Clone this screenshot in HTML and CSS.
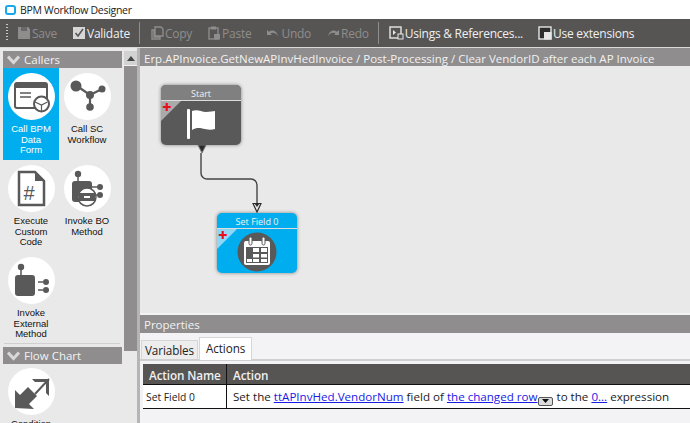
FILE: index.html
```html
<!DOCTYPE html>
<html lang="en">
<head>
<meta charset="utf-8">
<title>BPM Workflow Designer</title>
<link rel="stylesheet" href="styles.css">
</head>
<body>
<div class="app">
  <header class="titlebar">
    <svg class="app-icon" width="11" height="10" viewBox="0 0 11 10"><rect x="1" y="1" width="9" height="8" rx="2" fill="#fff" stroke="#1aa7e8" stroke-width="2"/></svg>
    <span>BPM Workflow Designer</span>
  </header>
  <div class="toolbar">
    <span class="grip"></span>
    <span class="tool off"><svg width="14" height="14" viewBox="0 0 14 14"><path d="M1 1h10l2 2v10H1z" fill="#8e8c8c"/><rect x="4" y="1" width="6" height="4" fill="#6a6868"/></svg>Save</span>
    <span class="tool on"><svg width="14" height="14" viewBox="0 0 14 14"><rect x="1" y="1" width="12" height="12" fill="#d6d6d6"/><path d="M3.500 7l2.500 3 5-7" fill="none" stroke="#555" stroke-width="1.500"/></svg>Validate</span>
    <span class="sep"></span>
    <span class="tool off"><svg width="14" height="14" viewBox="0 0 14 14"><path d="M5 1h6l2 2v7H5z M2 4h2v7h6v2H2z" fill="none" stroke="#8e8c8c" stroke-width="1.400"/></svg>Copy</span>
    <span class="tool off"><svg width="14" height="14" viewBox="0 0 14 14"><rect x="2" y="2" width="9" height="11" fill="none" stroke="#8e8c8c" stroke-width="1.400"/><rect x="4" y="0.500" width="5" height="3" fill="#8e8c8c"/><rect x="7" y="8" width="6" height="5.500" fill="#8e8c8c"/></svg>Paste</span>
    <span class="tool off"><svg width="14" height="14" viewBox="0 0 14 14"><path d="M1 4v5h5L4.300 7.500C6.500 6 9.500 6.500 12 10c-1-4.500-5-7.500-9-4.200z" fill="#8e8c8c"/></svg>Undo</span>
    <span class="tool off"><svg width="14" height="14" viewBox="0 0 14 14"><path d="M13 4v5H8l1.700-1.500C7.500 6 4.500 6.500 2 10c1-4.500 5-7.500 9-4.200z" fill="#8e8c8c"/></svg>Redo</span>
    <span class="sep"></span>
    <span class="tool on"><svg width="15" height="14" viewBox="0 0 15 14"><rect x="1" y="1" width="11" height="11" fill="none" stroke="#e6e6e6" stroke-width="1.400"/><path d="M4 4l3 2.500L4 9z" fill="#e6e6e6"/><rect x="9" y="8" width="5" height="5" fill="#555" stroke="#e6e6e6"/></svg>Usings &amp; References...</span>
    <span class="tool on"><svg width="14" height="14" viewBox="0 0 14 14"><rect x="1" y="1" width="12" height="12" fill="#2e2e2e" stroke="#e6e6e6" stroke-width="1.400"/><rect x="6" y="6" width="7.500" height="7.500" fill="#e6e6e6"/></svg>Use extensions</span>
  </div>
  <div class="workspace">
    <aside class="palette">
      <div class="palette-list">
        <div class="group-head">
          <svg width="13" height="10" viewBox="0 0 13 10"><path d="M1 1.500l5.500 6 5.500-6" fill="none" stroke="#d8d8d8" stroke-width="3"/></svg>
          <span>Callers</span>
        </div>
        <div class="tiles">
          <div class="tile active">
            <span class="disc"><svg width="47" height="47" viewBox="0 0 47 47"><rect x="7" y="10" width="32" height="25" rx="2" fill="none" stroke="#595959" stroke-width="2"/><path d="M7 12a2 2 0 0 1 2-2h28a2 2 0 0 1 2 2v3H7z" fill="#595959"/><path d="M12 20h11M12 24h11" stroke="#595959" stroke-width="1.500"/><circle cx="33.500" cy="31" r="7.500" fill="#fff" stroke="#595959" stroke-width="2"/><path d="M27 29l6.500 3 6-3M33.500 32v6" fill="none" stroke="#595959" stroke-width="1.200"/></svg></span>
            <span class="tile-label">Call BPM<br>Data<br>Form</span>
          </div>
          <div class="tile">
            <span class="disc"><svg width="47" height="47" viewBox="0 0 47 47"><path d="M13 13L26 22L38 16M26 22V34" stroke="#595959" stroke-width="2.200" fill="none"/><circle cx="12" cy="13" r="5.500" fill="#595959"/><circle cx="26" cy="22" r="4" fill="#595959"/><circle cx="38" cy="16" r="3.500" fill="#595959"/><circle cx="26" cy="34" r="3.800" fill="#595959"/></svg></span>
            <span class="tile-label">Call SC<br>Workflow</span>
          </div>
          <div class="tile">
            <span class="disc"><svg width="47" height="47" viewBox="0 0 47 47"><path d="M11 7h16l9 9v24H11z" fill="none" stroke="#595959" stroke-width="2.500"/><path d="M27 7l9 9h-9z" fill="#595959"/><text x="15.500" y="35" class="hash">#</text></svg></span>
            <span class="tile-label">Execute<br>Custom<br>Code</span>
          </div>
          <div class="tile">
            <span class="disc"><svg width="47" height="47" viewBox="0 0 47 47"><circle cx="14" cy="9" r="3.200" fill="#595959"/><path d="M14 10v6" stroke="#595959" stroke-width="1.500"/><rect x="8" y="16" width="20" height="21" rx="3" fill="#595959"/><path d="M28 22h5M28 30h5" stroke="#595959" stroke-width="1.500"/><circle cx="36" cy="22" r="3" fill="#595959"/><circle cx="36" cy="30" r="3" fill="#595959"/><circle cx="23" cy="32" r="9" fill="#fff" stroke="#595959" stroke-width="1.500"/><rect x="15" y="28" width="16" height="8" fill="#595959"/><rect x="20" y="31" width="6" height="2" fill="#fff"/></svg></span>
            <span class="tile-label">Invoke BO<br>Method</span>
          </div>
          <div class="tile">
            <span class="disc"><svg width="47" height="47" viewBox="0 0 47 47"><circle cx="13" cy="10" r="3.200" fill="#595959"/><path d="M13 11v7" stroke="#595959" stroke-width="1.500"/><rect x="7" y="18" width="20" height="21" rx="3" fill="#595959"/><path d="M30 25h5M30 33h5" stroke="#595959" stroke-width="1.500"/><circle cx="38" cy="25" r="3" fill="#595959"/><circle cx="38" cy="33" r="3" fill="#595959"/></svg></span>
            <span class="tile-label">Invoke<br>External<br>Method</span>
          </div>
        </div>
        <div class="group-rule"></div>
        <div class="group-head">
          <svg width="13" height="10" viewBox="0 0 13 10"><path d="M1 1.500l5.500 6 5.500-6" fill="none" stroke="#d8d8d8" stroke-width="3"/></svg>
          <span>Flow Chart</span>
        </div>
        <div class="tiles tiles-flow">
          <div class="tile">
            <span class="disc"><svg width="47" height="47" viewBox="0 0 47 47"><path d="M7 40V22l5 5 8-8 9 9-8 8 5 5z" fill="#595959"/><path d="M41 11L27 26" fill="none" stroke="#595959" stroke-width="2"/><path d="M24 11h17v17l-3-3V14H27z" fill="#595959"/></svg></span>
            <span class="tile-label">Condition</span>
          </div>
        </div>
      </div>
      <div class="scrollbar">
        <span class="scroll-up"><svg width="8" height="5" viewBox="0 0 8 5"><path d="M4 0l4 5H0z" fill="#444"/></svg></span>
        <span class="scroll-thumb"></span>
      </div>
    </aside>
    <main class="designer">
      <div class="crumb">Erp.APInvoice.GetNewAPInvHedInvoice / Post-Processing / Clear VendorID after each AP Invoice</div>
      <div class="canvas">
        <svg class="wire" width="120" height="140" viewBox="0 0 120 140"><path d="M61 87V107a6 6 0 0 0 6 6H111a6 6 0 0 1 6 6V138" fill="none" stroke="#444" stroke-width="1.400"/></svg>
        <div class="node node-start">
          <div class="node-title">Start</div>
          <div class="node-body">
            <span class="corner"></span><span class="plus">✚</span>
            <svg class="node-icon" width="32" height="32" viewBox="0 0 32 32"><rect x="2" y="1" width="3" height="30" rx="1" fill="#fff"/><path d="M7 3c6-2 9 1 14 1 4 0 7-1 9-1v18c-3 1-6 1-10 0-5-1-8-2-13 1z" fill="#fff"/></svg>
          </div>
        </div>
        <svg class="arrow arrow-out" width="10" height="9" viewBox="0 0 10 9"><path d="M1 0h8L5 8z" fill="#2a2a2a" stroke="#777"/></svg>
        <div class="node node-set">
          <div class="node-title">Set Field 0</div>
          <div class="node-body">
            <span class="corner"></span><span class="plus">✚</span>
            <svg class="node-icon" width="40" height="40" viewBox="0 0 40 40"><circle cx="20" cy="20" r="19.500" fill="#595959"/><rect x="7" y="9" width="26" height="24" rx="2" fill="#fff"/><rect x="9" y="15" width="22" height="16" fill="#595959"/><g fill="#fff"><rect x="16" y="16" width="6" height="4"/><rect x="24" y="16" width="6" height="4"/><rect x="16" y="22" width="6" height="3.500"/><rect x="24" y="22" width="6" height="3.500"/><rect x="10" y="27" width="5" height="3"/><rect x="16" y="27" width="6" height="3"/><rect x="24" y="27" width="6" height="3"/></g><rect x="12" y="5" width="3" height="8" rx="1.500" fill="#fff" stroke="#595959"/><rect x="25" y="5" width="3" height="8" rx="1.500" fill="#fff" stroke="#595959"/></svg>
          </div>
        </div>
        <svg class="arrow arrow-in" width="10" height="10" viewBox="0 0 10 10"><path d="M1 0.500h8L5 9z" fill="#e9e9e9" stroke="#2a2a2a" stroke-width="1.200"/><path d="M2.500 0.500h5L5 4z" fill="#2a2a2a"/></svg>
      </div>
      <section class="props">
        <div class="props-head">Properties</div>
        <div class="tabs">
          <span class="tab">Variables</span>
          <span class="tab tab-active">Actions</span>
        </div>
        <div class="table">
          <div class="th th-name">Action Name</div>
          <div class="th">Action</div>
          <div class="td td-name">Set Field 0</div>
          <div class="td td-action">Set the <a href="#">ttAPInvHed.VendorNum</a> field of <a href="#">the changed row</a><span class="drop"><svg width="7" height="4" viewBox="0 0 7 4"><path d="M0 0h7L3.500 4z" fill="#111"/></svg></span> to the <a href="#">0...</a> expression</div>
        </div>
      </section>
    </main>
  </div>
</div>
</body>
</html>
```
FILE: styles.css
```css
* { box-sizing: border-box; }
html, body { margin: 0; height: 100%; overflow: hidden; }
body { font-family: "Open Sans", "Noto Sans", sans-serif; font-size: 12px; color: #222; background: #fff; }
.app { width: 690px; height: 423px; display: flex; flex-direction: column; overflow: hidden; }

.titlebar { height: 19px; display: flex; align-items: center; gap: 4px; padding: 0 0 0 5px; font-size: 10.500px; letter-spacing: -0.3px; color: #222; background: #fff; }
.app-icon { display: block; }

.toolbar { height: 28px; flex: none; display: flex; align-items: center; background: #565554; padding-left: 6px; font-size: 12px; letter-spacing: -0.25px; }
.grip { width: 2px; height: 18px; margin-right: 9px; background: repeating-linear-gradient(#c8c8c8 0 1px, transparent 1px 3px); }
.tool { display: inline-flex; align-items: center; gap: 1px; margin-right: 15px; white-space: nowrap; }
.tool svg { display: block; }
.tool.off { color: #8f8d8d; }
.tool.on { color: #f0f0f0; }
.sep { width: 1px; height: 22px; background: #8f8d8d; margin: 0 10px 0 -6px; }

.workspace { flex: 1; min-height: 0; display: flex; background: #d9d9d9; padding-top: 1px; }

.palette { width: 140px; flex: none; display: flex; padding-left: 1px; background: #e9e9e9; border-right: 3px solid #b5b5b5; }
.palette-list { width: 122px; flex: none; padding: 3px 0 0 2px; overflow: hidden; }
.group-head { height: 17px; display: flex; align-items: center; gap: 4px; padding-left: 4px; background: #8f8d8d; color: #f2f2f2; font-size: 11.500px; width: 119px; }
.group-head svg { display: block; }
.tiles { display: grid; grid-template-columns: 56px 56px; }
.tiles-flow { margin-top: -1px; }
.tile { height: 92px; padding-top: 5px; display: flex; flex-direction: column; align-items: center; font-family: "Liberation Sans", Arial, sans-serif; font-size: 9.500px; line-height: 10.500px; color: #111; text-align: center; }
.tile.active { background: #00aeef; color: #fff; }
.disc { width: 47px; height: 47px; flex: none; border-radius: 50%; background: #fff; display: block; margin-bottom: 4px; }
.disc svg { display: block; }
.hash { font-family: "Liberation Sans", sans-serif; font-size: 20px; fill: #595959; }
.group-rule { height: 1px; background: #d0d0d0; margin: -1px 3px 3px 1px; }
.scrollbar { width: 13px; flex: none; margin: 3px 0 0 1px; display: flex; flex-direction: column; }
.scroll-up { height: 15px; flex: none; display: flex; align-items: center; justify-content: center; background: #d2d2d2; border-bottom: 1px solid #f2f2f2; }
.scroll-thumb { height: 285px; flex: none; background: #8f8d8d; }

.designer { flex: 1; min-width: 0; display: flex; flex-direction: column; background: #f3f3f5; }
.crumb { height: 18px; flex: none; padding-left: 4px; background: #8f8d8d; color: #f2f2f2; font-size: 11.500px; line-height: 21px; white-space: nowrap; overflow: hidden; }
.canvas { position: relative; height: 247px; flex: none; background: #e9e9e9; }
.wire { position: absolute; left: 0; top: 0; display: block; }

.node { position: absolute; width: 80px; height: 60px; border-radius: 5px; box-shadow: 0 0 3px 1px #aaa; overflow: hidden; color: #f2f2f2; display: flex; flex-direction: column; }
.node-start { left: 21px; top: 19px; background: #595959; }
.node-set { left: 77px; top: 147px; background: #00aeef; }
.node-title { height: 16px; flex: none; text-align: center; font-size: 9px; line-height: 17px; border-bottom: 1px solid #ddd; }
.node-start .node-title { background: #808080; }
.node-body { position: relative; flex: 1; display: flex; align-items: center; justify-content: center; }
.node-start .node-body { padding-top: 2px; }
.node-set .node-body { align-items: flex-end; padding-bottom: 1px; }
.corner { position: absolute; left: 0; top: 0; width: 0; height: 0; border-top: 20px solid #aaa; border-right: 20px solid transparent; }
.node-set .corner { border-top-color: #8fd8f5; }
.plus { position: absolute; left: 1px; top: 1px; color: #e8101c; font: 11px/11px "DejaVu Sans", sans-serif; }
.node-icon { display: block; }
.arrow { position: absolute; display: block; }
.arrow-out { left: 57px; top: 79px; }
.arrow-in { left: 112px; top: 137px; }

.props { flex: 1; min-height: 0; background: #f3f3f5; padding-top: 2px; }
.props-head { height: 18px; background: #8f8d8d; color: #f2f2f2; padding-left: 4px; font-size: 11.500px; line-height: 20px; }
.tabs { height: 28px; display: flex; align-items: flex-end; padding-left: 1px; border-bottom: 2px solid #cfcfcf; }
.tab { width: 57px; height: 19px; padding-left: 3px; font-size: 11.700px; line-height: 18px; letter-spacing: -0.1px; background: #ededed; border: 1px solid #d6d6d6; border-bottom: 0; color: #222; }
.tab-active { width: 53px; height: 23px; margin-left: 1px; margin-bottom: -1px; padding-left: 6px; line-height: 20px; background: #fff; }
.table { display: grid; grid-template-columns: 84px 1fr; margin: 3px 0 0 3px; border-bottom: 1px solid #111; background: #fff; }
.th { height: 21px; background: #565554; color: #f0f0f0; font-weight: 600; font-size: 11.700px; line-height: 22px; padding-left: 6px; border-bottom: 1px solid #111; letter-spacing: -0.1px; }
.th-name { border-right: 1px solid #111; }
.td { height: 23px; background: #fff; font-size: 11.600px; line-height: 24px; white-space: nowrap; }
.td-name { padding-left: 3px; font-size: 10.300px; border-right: 1px solid #111; }
.td-action { padding-left: 6px; }
.td a { color: #1a1ae6; text-decoration: underline; }
.drop { display: inline-flex; align-items: center; justify-content: center; width: 15px; height: 9px; margin-left: 1px; vertical-align: -2px; background: #dcdcdc; border: 1px solid #555; border-radius: 2px; }
.drop svg { display: block; }
```
